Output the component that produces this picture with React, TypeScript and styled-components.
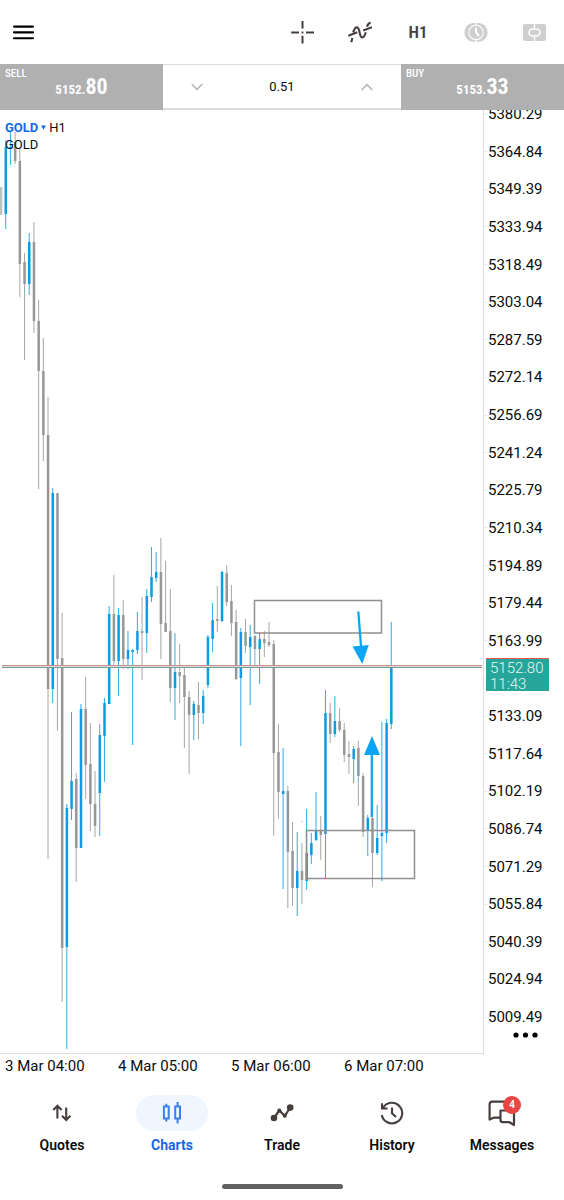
import React from "react";
import styled, { createGlobalStyle } from "styled-components";

const BLUE = "#0b9ce4";
const GRAY = "#979797";
const ACCENT = "#1668e8";
const ICON = "#463e3c";

const GlobalStyle = createGlobalStyle`
  * { box-sizing: border-box; }
  body { margin: 0; background: #fff; color: #0c0c0c; font-family: Roboto, "Liberation Sans", sans-serif; }
  button, input { font: inherit; color: inherit; border: 0; background: none; padding: 0; margin: 0; }
  svg { display: block; }
`;

const Screen = styled.div`
  min-height: 100vh;
  display: flex;
  flex-direction: column;
`;

const Toolbar = styled.header`
  height: 64px;
  display: flex;
  align-items: center;
  justify-content: space-between;
  padding: 0 18px 0 11px;
`;

const ToolGroup = styled.div`
  display: flex;
  gap: 34px;
`;

const ToolButton = styled.button`
  width: 24px;
  height: 24px;
  display: grid;
  place-items: center;
  font-family: "Roboto Condensed", Roboto, sans-serif;
  font-size: 17px;
  font-weight: 600;
  color: ${ICON};
`;

const TradeBar = styled.section`
  height: 46px;
  display: grid;
  grid-template-columns: 163fr 238fr 163fr;
`;

const PriceButton = styled.button`
  background: #b0b0b0;
  color: #fff;
  display: flex;
  flex-direction: column;
  align-items: stretch;
  justify-content: flex-start;
  text-align: left;
  padding: 5px;
  font-family: "Roboto Condensed", "Liberation Sans Narrow", Roboto, sans-serif;
`;

const Side = styled.span`
  font-size: 11px;
  line-height: 10px;
  font-weight: 500;
`;

const Price = styled.span`
  text-align: center;
  font-size: 13px;
  line-height: 16px;
  font-weight: 700;
`;

const Pips = styled.span`
  font-size: 22px;
`;

const Volume = styled.div`
  display: grid;
  grid-template-columns: 68px 1fr 68px;
  align-items: center;
  justify-items: center;
  border-top: 1px solid #dcdcdc;
  border-bottom: 2px solid #dcdcdc;
`;

const StepButton = styled.button`
  width: 24px;
  height: 24px;
  display: grid;
  place-items: center;
`;

const VolumeInput = styled.input`
  width: 100%;
  text-align: center;
  font-size: 13px;
`;

const ChartArea = styled.main`
  display: grid;
  grid-template-columns: 1fr 80px;
  overflow: hidden;
`;

const Plot = styled.div`
  position: relative;
  border-right: 1px solid #dcdcdc;
  border-bottom: 1px solid #dcdcdc;
`;

const Canvas = styled.svg`
  width: 100%;
  height: auto;
`;

const Legend = styled.div`
  position: absolute;
  top: 9px;
  left: 5px;
  font-size: 13px;
  line-height: 17px;
`;

const SymbolButton = styled.button`
  display: flex;
  align-items: center;
  gap: 3px;
`;

const SymbolName = styled.span`
  color: ${ACCENT};
  font-weight: 700;
`;

const PriceAxis = styled.div`
  position: relative;
  display: flex;
  flex-direction: column;
  margin-top: -5px;
`;

const PriceList = styled.ol`
  list-style: none;
  margin: 0;
  padding: 0;
  flex: 1;
  display: flex;
  flex-direction: column;
  justify-content: space-between;
`;

const PriceTick = styled.li`
  height: 18px;
  display: flex;
  align-items: center;
  gap: 1px;
  font-size: 15px;
  line-height: 18px;
  &::before { content: ""; width: 3px; height: 1px; background: #e8e8e8; }
`;

const CurrentPrice = styled.div`
  position: absolute;
  top: 553px;
  left: 2px;
  width: 63px;
  height: 33px;
  padding: 1px 4px;
  border-top: 1px solid #ef5350;
  background: #26a69a;
  color: #e9f6f4;
  font-size: 15px;
  font-weight: 300;
  line-height: 16px;
`;

const MoreButton = styled.button`
  height: 28px;
  padding: 6px 0 16px 29px;
`;

const TimeAxis = styled.div`
  display: grid;
  grid-template-columns: repeat(4, 1fr);
  padding: 3px 107px 0 5px;
  font-size: 15px;
  line-height: 18px;
  white-space: nowrap;
`;

const TabBar = styled.nav`
  display: grid;
  grid-template-columns: repeat(5, 1fr);
  padding: 20px 7px 0;
`;

const Tab = styled.a<{ $active?: boolean }>`
  display: flex;
  flex-direction: column;
  align-items: center;
  gap: 5px;
  font-size: 14px;
  line-height: 18px;
  font-weight: ${(p) => (p.$active ? 700 : 600)};
  text-decoration: none;
  color: ${(p) => (p.$active ? ACCENT : "#0c0c0c")};
`;

const TabIcon = styled.span<{ $active?: boolean }>`
  position: relative;
  width: 72px;
  height: 36px;
  border-radius: 18px;
  display: grid;
  place-items: center;
  color: ${(p) => (p.$active ? "#3b7ff0" : ICON)};
  background: ${(p) => (p.$active ? "#eff6fd" : "transparent")};
`;

const Badge = styled.span`
  position: absolute;
  top: 1px;
  left: 37px;
  width: 18px;
  height: 18px;
  border-radius: 9px;
  background: #ea4545;
  color: #fff;
  font-size: 10px;
  line-height: 18px;
  text-align: center;
`;

const HomeBar = styled.div`
  width: 121px;
  height: 5px;
  border-radius: 3px;
  background: #616161;
  margin: 30px auto 11px;
`;

type Candle = [up: 0 | 1, high: number, top: number, bottom: number, low: number];

const candles: Candle[] = [
  [0, 187, 187, 215, 215], [1, 140, 147, 214, 229], [1, 131, 147, 148, 165], [0, 132, 142, 161, 164],
  [0, 148, 161, 264, 297], [0, 253, 262, 284, 360], [1, 233, 242, 284, 295], [0, 222, 242, 321, 333],
  [0, 300, 321, 371, 489], [0, 338, 371, 435, 461], [0, 397, 435, 689, 859], [1, 488, 493, 689, 703],
  [0, 493, 493, 659, 731], [0, 613, 658, 948, 1002], [1, 804, 808, 947, 1049], [1, 712, 781, 809, 820],
  [0, 773, 779, 848, 882], [1, 704, 709, 848, 848], [0, 677, 709, 765, 799], [0, 723, 764, 804, 831],
  [0, 771, 804, 826, 837], [1, 724, 735, 793, 836], [1, 698, 703, 736, 782], [1, 606, 614, 704, 704],
  [0, 575, 614, 661, 665], [1, 608, 615, 661, 696], [0, 600, 615, 659, 669], [1, 631, 650, 659, 669],
  [1, 649, 650, 652, 745], [1, 612, 631, 650, 654], [0, 597, 631, 633, 680], [1, 589, 596, 633, 653],
  [1, 547, 577, 597, 602], [1, 552, 572, 578, 582], [0, 538, 572, 624, 659], [0, 561, 623, 632, 632],
  [0, 589, 631, 688, 702], [1, 633, 672, 688, 720], [0, 644, 672, 676, 703], [0, 667, 675, 697, 748],
  [0, 691, 697, 715, 774], [1, 701, 704, 715, 740], [0, 682, 705, 713, 739], [1, 690, 696, 713, 724],
  [1, 635, 637, 685, 688], [1, 603, 620, 639, 652], [0, 586, 619, 621, 632], [1, 571, 572, 621, 622],
  [0, 565, 573, 602, 606], [0, 585, 601, 623, 636], [0, 610, 622, 679, 680], [1, 628, 632, 678, 746],
  [0, 619, 632, 646, 653], [1, 625, 637, 647, 705], [0, 635, 636, 649, 665], [1, 633, 639, 649, 684],
  [0, 631, 639, 643, 657], [0, 622, 642, 645, 647], [0, 640, 644, 753, 836], [0, 724, 752, 792, 819],
  [1, 748, 791, 794, 889], [0, 786, 791, 852, 908], [0, 822, 851, 888, 906], [1, 832, 871, 888, 916],
  [0, 843, 871, 880, 904], [1, 809, 853, 881, 890], [1, 833, 843, 855, 864], [1, 792, 831, 840, 841],
  [0, 816, 831, 835, 860], [1, 690, 713, 834, 879], [0, 703, 713, 734, 743], [1, 696, 721, 734, 737],
  [0, 708, 721, 730, 732], [0, 723, 730, 755, 762], [0, 741, 754, 757, 774], [1, 746, 749, 759, 783],
  [0, 741, 748, 776, 806], [0, 773, 776, 832, 837], [1, 815, 818, 831, 856], [0, 817, 818, 853, 887],
  [1, 805, 838, 853, 855], [1, 722, 833, 836, 881], [1, 719, 723, 833, 843], [1, 622, 667, 724, 729],
];

const prices = [
  "5380.29", "5364.84", "5349.39", "5333.94", "5318.49", "5303.04", "5287.59", "5272.14", "5256.69",
  "5241.24", "5225.79", "5210.34", "5194.89", "5179.44", "5163.99", "", "5133.09", "5117.64", "5102.19",
  "5086.74", "5071.29", "5055.84", "5040.39", "5024.94", "5009.49",
];

const times = ["3 Mar 04:00", "4 Mar 05:00", "5 Mar 06:00", "6 Mar 07:00"];

function CandleChart() {
  return (
    <Canvas viewBox="0 110 483 943" role="img" aria-label="GOLD H1 candles">
      {candles.map(([up, high, top, bottom, low], i) => {
        const x = 1 + i * 4.702;
        const color = up ? BLUE : GRAY;
        return (
          <g key={i} fill={color} opacity={i === 0 ? 0.6 : 1}>
            <rect x={x - 0.5} y={high} width={1} height={low - high} opacity={0.85} />
            <rect x={x - 1.2} y={top} width={2.5} height={bottom - top} />
          </g>
        );
      })}
      <circle cx={302} cy={821.5} r={0.8} fill="#d9c4c4" />
      <path d="M2 665.5H482" stroke="#c9918c" />
      <path d="M2 666.5H482" stroke="#d5dedc" />
      <path d="M2 667.5H482" stroke="#7a9a98" />
      <g fill="none" stroke="#8f8f8f" strokeWidth={1.5}>
        <rect x={254.5} y={600.5} width={127} height={32.5} />
        <rect x={306.5} y={830.5} width={108} height={48} />
      </g>
      <g stroke="#0aa5f5" strokeWidth={2.3} fill="#0aa5f5">
        <path d="M358.3 611.5 361 646" />
        <path d="M371.8 817V754" />
        <path d="M352.5 646.5 368.8 645 362.3 664Z" stroke="none" />
        <path d="M364 755H380L372 736Z" stroke="none" />
      </g>
    </Canvas>
  );
}

const MenuIcon = () => (
  <svg width="24" height="24" viewBox="0 0 24 24" stroke="#000" strokeWidth="2.1" strokeLinecap="round">
    <path d="M3 6.6H22M3 12.4H22M3 18.2H22" />
  </svg>
);

const CrosshairIcon = () => (
  <svg width="24" height="24" viewBox="0 0 24 24" stroke={ICON} strokeWidth="2">
    <path d="M12.5 1V8.5M12.5 15.8V23.6M1.2 12.5H9M16 12.5H24M11.6 12.5H13.4" />
  </svg>
);

const IndicatorIcon = () => (
  <svg width="24" height="24" viewBox="0 0 24 24" stroke={ICON} strokeWidth="2.1" fill="none">
    <path d="M.3 15.8 9.2 12.2M15.2 10.6 24 7.2M3.3 22.2 4.4 18M5.2 12.4C6.2 9 7.3 7.4 8.8 7.4c3.6 0 2 10 5.4 10 2 0 2.8-2.2 3.6-5.2M19 6.8C19.7 4.4 20.6 3.2 22.6 2.6" />
  </svg>
);

const ClockIcon = () => (
  <svg width="24" height="24" viewBox="0 0 24 24">
    <path fill="#cfcfcf" d="M9 3H15A8.5 9.4 0 0 1 15 21.8H9A8.5 9.4 0 0 1 9 3Z" />
    <path d="M12 2V6M12 19V23" stroke="#fff" strokeWidth="1.4" />
    <circle cx="12" cy="12.4" r="7.2" fill="#cfcfcf" stroke="#fff" strokeWidth="1.1" />
    <path d="M12 7.8V12.4L15 16" stroke="#fff" strokeWidth="2" fill="none" />
  </svg>
);

const OneClickIcon = () => (
  <svg width="24" height="24" viewBox="0 0 24 24">
    <rect x="1" y="4" width="23" height="17" rx="2" fill="#cfcfcf" />
    <path d="M12.5 4V8M12.5 17V21" stroke="#fff" strokeWidth="1.4" />
    <rect x="7" y="9" width="11" height="7" rx="3.5" fill="#cfcfcf" stroke="#fff" strokeWidth="1.6" />
  </svg>
);

const QuotesIcon = () => (
  <svg width="24" height="24" viewBox="0 0 24 24" stroke="currentColor" strokeWidth="2.1" fill="none">
    <path d="M7.4 17.4V5M3.2 9 7.4 4.8 11.6 9M16.2 6.5V18.8M12 14.7 16.2 18.9 20.4 14.7" />
  </svg>
);

const ChartsIcon = () => (
  <svg width="24" height="24" viewBox="0 0 24 24" stroke="currentColor" strokeWidth="2" fill="none">
    <path d="M3.9 5.5H8.7V17.5H3.9ZM6.3 2.8V5M6.3 18V20.4M15.2 5.5H20V17.5H15.2ZM17.6 1V5M17.6 18V22.4" />
  </svg>
);

const TradeIcon = () => (
  <svg width="24" height="24" viewBox="0 0 24 24" stroke="currentColor" strokeWidth="2.2" fill="none">
    <path d="M4 17 9.3 9.5 14.8 14.8 20 7" />
    <g fill="currentColor" stroke="none">
      <circle cx="4" cy="17" r="3.3" />
      <circle cx="9.3" cy="9.5" r="2" />
      <circle cx="14.8" cy="14.8" r="2" />
      <circle cx="20.2" cy="6.6" r="3.3" />
    </g>
  </svg>
);

const HistoryIcon = () => (
  <svg width="24" height="24" viewBox="0 0 24 24" stroke="currentColor" strokeWidth="2.1" fill="none">
    <path d="M1.8 14A10.3 10.3 0 1 0 3.2 6.6M2 2.3V7.5H7.6M12 6.5V12.4L16 16" />
  </svg>
);

const MessagesIcon = () => (
  <svg width="28" height="28" viewBox="0 0 28 28" stroke="currentColor" strokeWidth="2.2" fill="none" strokeLinejoin="round">
    <path d="M12 18.6H6.2L1.6 20.6V5.2A2.6 2.6 0 0 1 4.2 2.6H18M26 12V26L21.5 23.2H14.8A2.3 2.3 0 0 1 12.5 21V11.5H18" />
  </svg>
);

const tabs = [
  { label: "Quotes", Icon: QuotesIcon },
  { label: "Charts", Icon: ChartsIcon, active: true },
  { label: "Trade", Icon: TradeIcon },
  { label: "History", Icon: HistoryIcon },
  { label: "Messages", Icon: MessagesIcon, badge: 4 },
];

export default function App() {
  return (
    <Screen>
      <GlobalStyle />
      <Toolbar>
        <ToolButton aria-label="Menu"><MenuIcon /></ToolButton>
        <ToolGroup>
          <ToolButton aria-label="Crosshair"><CrosshairIcon /></ToolButton>
          <ToolButton aria-label="Indicators"><IndicatorIcon /></ToolButton>
          <ToolButton>H1</ToolButton>
          <ToolButton aria-label="Trading hours"><ClockIcon /></ToolButton>
          <ToolButton aria-label="One click trading"><OneClickIcon /></ToolButton>
        </ToolGroup>
      </Toolbar>
      <TradeBar>
        <PriceButton>
          <Side>SELL</Side>
          <Price>5152.<Pips>80</Pips></Price>
        </PriceButton>
        <Volume>
          <StepButton aria-label="Decrease volume">
            <svg width="12" height="8" viewBox="0 0 12 8" fill="none" stroke="#b5b5b5" strokeWidth="1.5"><path d="M.7 1 6 6.4 11.3 1" /></svg>
          </StepButton>
          <VolumeInput aria-label="Volume" defaultValue="0.51" />
          <StepButton aria-label="Increase volume">
            <svg width="12" height="8" viewBox="0 0 12 8" fill="none" stroke="#b5b5b5" strokeWidth="1.5"><path d="M.7 7 6 1.6 11.3 7" /></svg>
          </StepButton>
        </Volume>
        <PriceButton>
          <Side>BUY</Side>
          <Price>5153.<Pips>33</Pips></Price>
        </PriceButton>
      </TradeBar>
      <ChartArea>
        <Plot>
          <CandleChart />
          <Legend>
            <SymbolButton>
              <SymbolName>GOLD</SymbolName>
              <svg width="5" height="5" viewBox="0 0 5 5" fill={ACCENT}><path d="M0 .5H5L2.5 4.8Z" /></svg>
              <span>H1</span>
            </SymbolButton>
            <div>GOLD</div>
          </Legend>
        </Plot>
        <PriceAxis>
          <PriceList>
            {prices.map((price, i) => <PriceTick key={i}>{price}</PriceTick>)}
          </PriceList>
          <CurrentPrice>
            <div>5152.80</div>
            <div>11:43</div>
          </CurrentPrice>
          <MoreButton aria-label="More">
            <svg width="26" height="6" viewBox="0 0 26 6"><circle cx="3" cy="3" r="2.6" /><circle cx="12.5" cy="3" r="2.6" /><circle cx="22" cy="3" r="2.6" /></svg>
          </MoreButton>
        </PriceAxis>
      </ChartArea>
      <TimeAxis>
        {times.map((t) => <time key={t}>{t}</time>)}
      </TimeAxis>
      <TabBar>
        {tabs.map(({ label, Icon, active, badge }) => (
          <Tab key={label} href={"#" + label.toLowerCase()} $active={active}>
            <TabIcon $active={active}>
              <Icon />
              {badge && <Badge>{badge}</Badge>}
            </TabIcon>
            {label}
          </Tab>
        ))}
      </TabBar>
      <HomeBar />
    </Screen>
  );
}
